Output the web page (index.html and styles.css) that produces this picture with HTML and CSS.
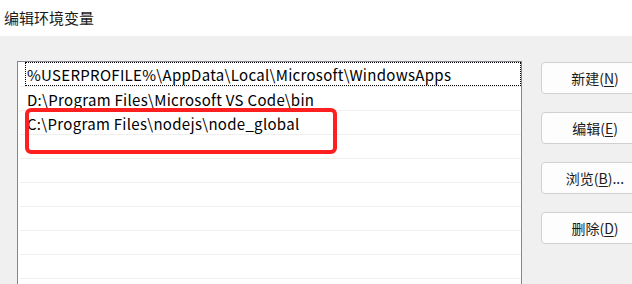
FILE: index.html
```html
<!DOCTYPE html>
<html lang="zh-CN">
<head>
<meta charset="utf-8">
<title>编辑环境变量</title>
<link rel="stylesheet" href="styles.css">
</head>
<body>
<div class="titlebar">编辑环境变量</div>
<div class="content">
  <div class="list">
    <div class="row"><div class="cell focused">%USERPROFILE%\AppData\Local\Microsoft\WindowsApps</div></div>
    <div class="row"><div class="cell">D:\Program Files\Microsoft VS Code\bin</div></div>
    <div class="row"><div class="cell">C:\Program Files\nodejs\node_global</div></div>
    <div class="row"><div class="cell"></div></div>
    <div class="row"><div class="cell"></div></div>
    <div class="row"><div class="cell"></div></div>
    <div class="row"><div class="cell"></div></div>
    <div class="row"><div class="cell"></div></div>
    <div class="row"><div class="cell"></div></div>
    <div class="highlight"></div>
  </div>
  <div class="buttons">
    <button class="btn">新建(<u>N</u>)</button>
    <button class="btn">编辑(<u>E</u>)</button>
    <button class="btn">浏览(<u>B</u>)...</button>
    <button class="btn">删除(<u>D</u>)</button>
  </div>
</div>
</body>
</html>
```
FILE: styles.css
```css
html, body {
  margin: 0;
  padding: 0;
  overflow: hidden;
}
body {
  width: 632px;
  height: 284px;
  background: #f0f0f0;
  font-family: "Noto Sans CJK SC", "Noto Sans", sans-serif;
  color: #000;
}
.titlebar {
  height: 36px;
  background: #fff;
  padding-left: 4px;
  box-sizing: border-box;
  font-size: 15px;
  line-height: 35px;
  color: #1a1a1a;
}
.content {
  display: flex;
  align-items: flex-start;
  padding: 25px 0 0 17px;
  gap: 19px;
}
.list {
  position: relative;
  width: 505px;
  height: 223px;
  overflow: hidden;
  box-sizing: border-box;
  flex: none;
  background: #fff;
  border: 1px solid #828790;
  border-bottom: none;
  padding: 0 0 0 2px;
}
.row {
  height: 24px;
  border-bottom: 1px solid #efefef;
  box-sizing: border-box;
  display: flex;
}
.row:first-child {
  height: 25px;
}
.cell {
  flex: 1;
  margin-left: 5px;
  padding-left: 1px;
  font-family: "Noto Sans CJK SC", "Noto Sans", sans-serif;
  font-size: 15px;
  letter-spacing: 0.3px;
  line-height: 23px;
  white-space: nowrap;
  border: 1px solid transparent;
  border-right: none;
}
.cell.focused {
  border: 1px dotted #000;
}
.highlight {
  position: absolute;
  left: 7px;
  top: 46px;
  width: 312px;
  height: 46px;
  box-sizing: border-box;
  border: 4px solid #fe2020;
  border-radius: 6px;
}
.buttons {
  display: flex;
  flex-direction: column;
  gap: 18px;
  flex: none;
  padding-top: 1px;
}
.btn {
  width: 108px;
  height: 32px;
  box-sizing: border-box;
  background: #fdfdfd;
  border: 1px solid #d0d0d0;
  border-radius: 4px;
  font-family: "Noto Sans CJK SC", "Noto Sans", sans-serif;
  font-size: 14px;
  color: #1b1b1b;
  padding: 0;
}
.btn u {
  text-underline-offset: 2px;
}
```
